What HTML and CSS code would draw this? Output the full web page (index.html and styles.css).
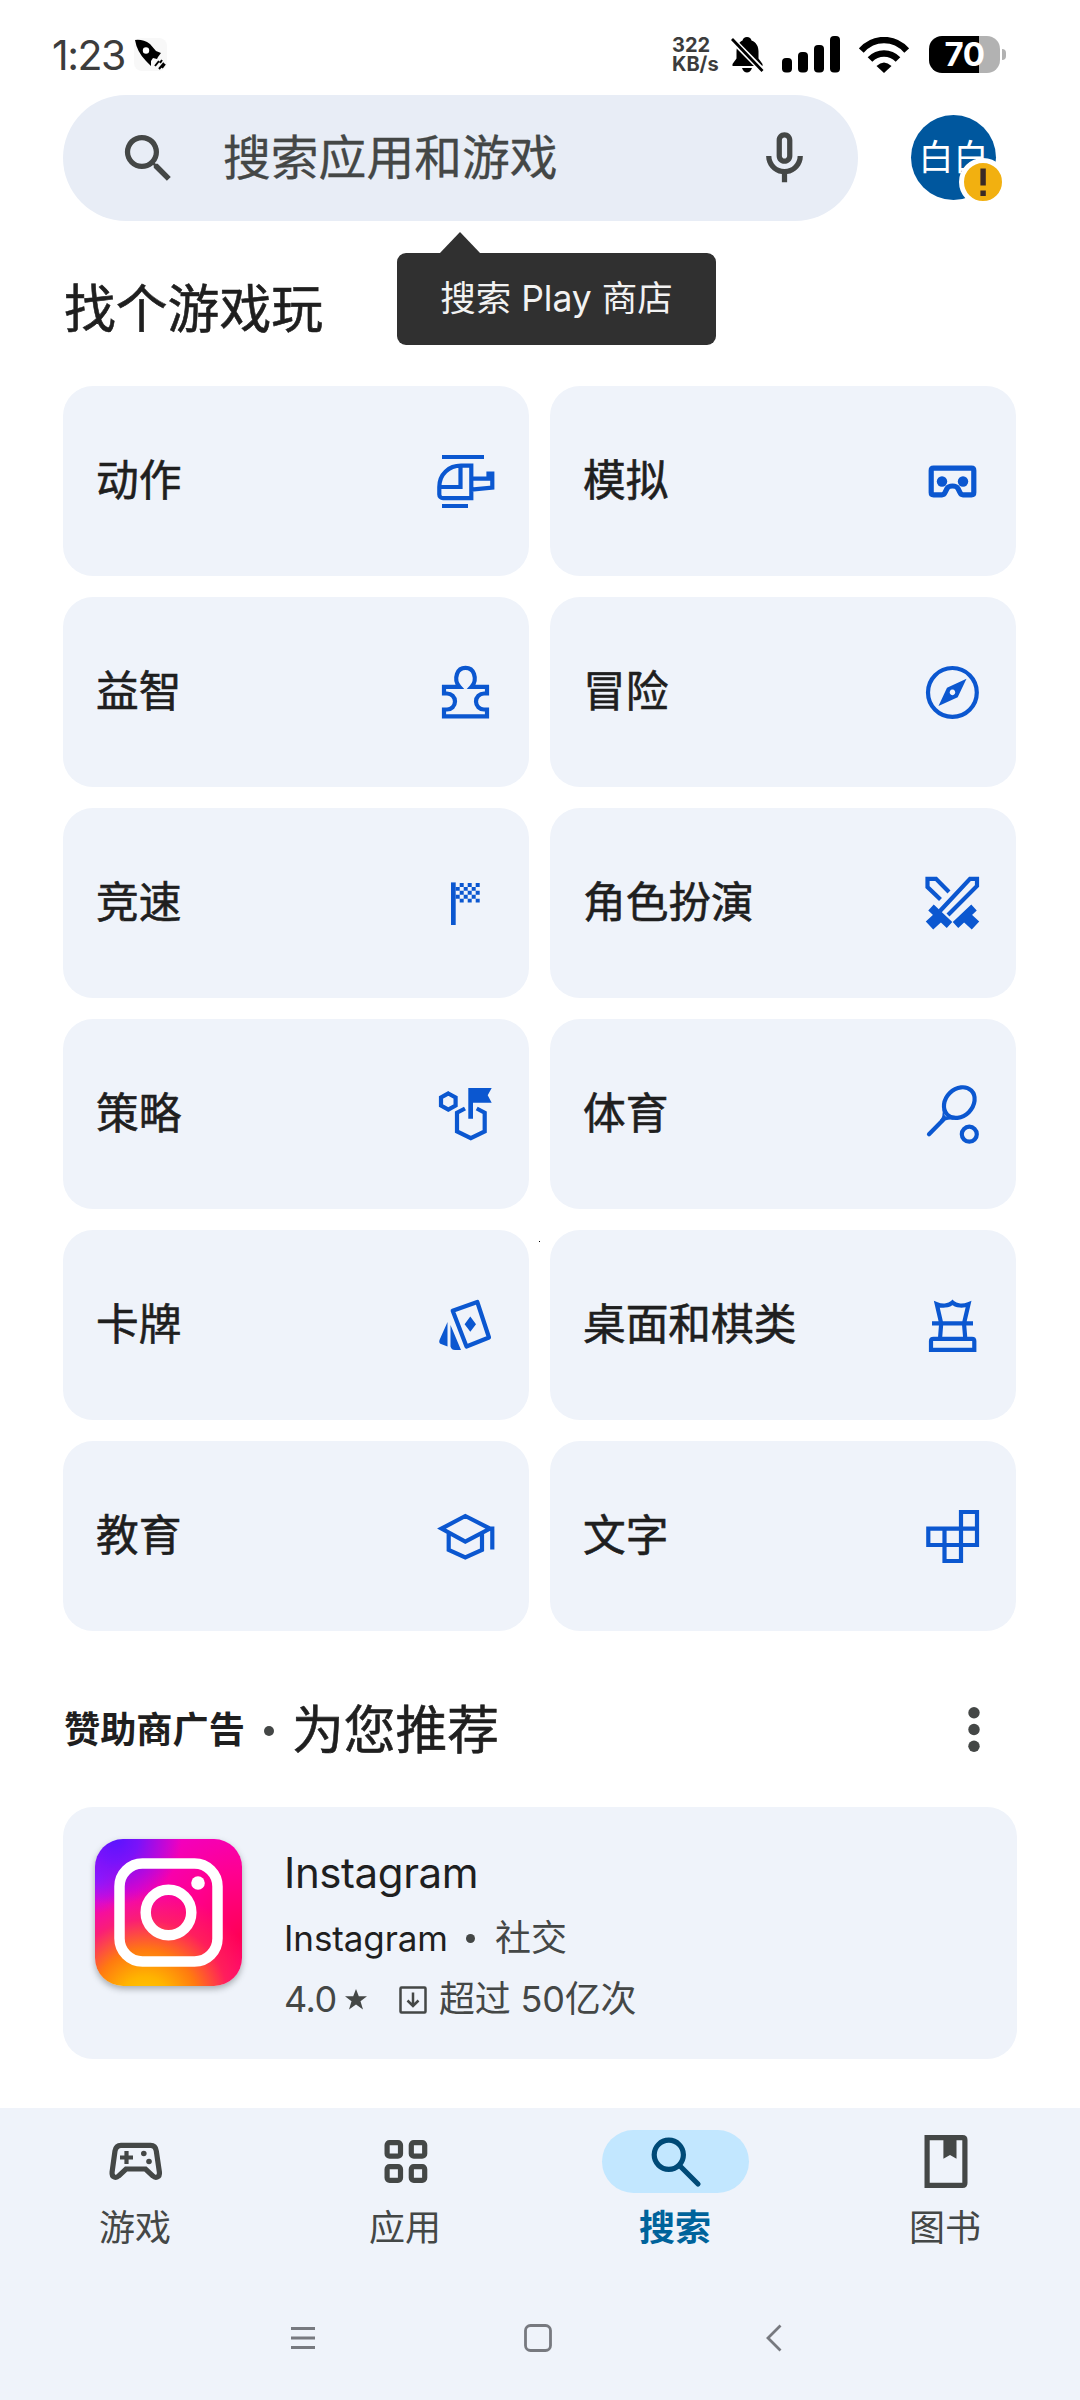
FILE: index.html
```html
<!DOCTYPE html>
<html lang="zh-CN">
<head>
<meta charset="utf-8">
<title>搜索应用和游戏</title>
<link rel="stylesheet" href="styles.css">
</head>
<body>
<div class="screen">
  <header class="status">
    <span class="clock">1:23</span>
    <svg class="rocket" width="33" height="33" viewBox="0 0 33 33"><rect width="33" height="33" rx="8" fill="#f8f8f8"/><path d="M1 2Q9 1 16 6L22 13 27 15 24 19 23 21 19 20 17 23 17 28 12 23Q3 14 1 2Z"/><circle cx="12" cy="12.500" r="3.200" fill="#fff"/><path d="M21 28l4-5M25 31l5-6M28 22l-2 3M31 26l-3 4" stroke="#000" stroke-width="2"/></svg>
    <span class="net"><b>322</b><b>KB/s</b></span>
    <svg class="bell" width="33" height="36" viewBox="0 0 33 36"><path d="M16 0c2.500 0 4 1.500 4.500 3.500 5 2 7 6 7 11v7l4 5.500v2H1.500v-2l4-5.500v-7c0-5 2-9 6-11C12 1.500 13.500 0 16 0zM11 31h10c-1 3-3 4.500-5 4.500S12 34 11 31z"/><path d="M0 1.500 32 34" stroke="#fff" stroke-width="6"/><path d="M1 2 31.500 34" stroke="#000" stroke-width="2.800"/></svg>
    <svg class="bars" width="58" height="37" viewBox="0 0 58 37"><rect x="0" y="22" width="10" height="14.500" rx="4"/><rect x="16" y="16" width="10" height="20.500" rx="4"/><rect x="32" y="9" width="10" height="27.500" rx="4"/><rect x="48" y="0" width="10" height="36.500" rx="4"/></svg>
    <svg class="wifi" width="50" height="36" viewBox="0 0 50 36"><g fill="none" stroke="#000" stroke-width="6.500"><path d="M2.300 13.500C15-.400 35-.400 47.700 13.500"/><path d="M11 22.500C19 14.500 31 14.500 39 22.500"/></g><path d="M17.500 29Q25 22 32.500 29L25 36Z"/></svg>
    <span class="battery"><span>70</span></span>
    <i class="battery-tip"></i>
  </header>

  <div class="top">
    <div class="searchbar">
      <svg width="63" height="63" viewBox="0 0 24 24" fill="#444746"><path d="M15.500 14h-.79l-.28-.27A6.471 6.471 0 0 0 16 9.500 6.500 6.500 0 1 0 9.500 16c1.610 0 3.090-.59 4.230-1.570l.27.28v.79l5 4.990L20.490 19l-4.990-5zm-6 0C7.010 14 5 11.990 5 9.500S7.010 5 9.500 5 14 7.010 14 9.500 11.990 14 9.500 14z"/></svg>
      <span class="hint">搜索应用和游戏</span>
      <svg width="63" height="63" viewBox="0 0 24 24" fill="#444746"><path d="M12 14c1.660 0 3-1.340 3-3V5c0-1.660-1.340-3-3-3S9 3.340 9 5v6c0 1.660 1.340 3 3 3zm-1-9c0-.55.45-1 1-1s1 .45 1 1v6c0 .55-.45 1-1 1s-1-.45-1-1V5zm6 6c0 2.760-2.240 5-5 5s-5-2.240-5-5H5c0 3.530 2.610 6.430 6 6.920V21h2v-3.080c3.390-.49 6-3.390 6-6.920h-2z"/></svg>
      <div class="tooltip">搜索 Play 商店</div>
    </div>
    <div class="avatar"><span>白白</span><i class="badge"><svg width="38" height="38" viewBox="0 0 38 38"><path d="M16.400 5.500h5.400v17h-5.400zM16.400 27.500h5.400v5.500h-5.400z" fill="#3a2a26"/></svg></i></div>
  </div>

  <h2 class="heading">找个游戏玩</h2>

  <main class="grid">
    <a class="card"><span>动作</span><svg class="ico" viewBox="0 0 64 64"><path d="M9 8H51M38.300 16.600V49.200H10A3.700 3.700 0 0 1 6.300 45.500V38C6.300 25 16 16.600 28 16.600ZM27.500 17V38H6.500M38.300 29.600H55.500V24.500H59.300V38.600L38.300 40.600M9 57H35"/></svg></a>
    <a class="card"><span>模拟</span><svg class="ico" viewBox="0 0 64 64"><path stroke-width="5.200" d="M13.500 19.200H51.500Q53.800 19.200 53.800 21.500V43.500Q53.800 45.800 51.500 45.800H43Q41 45.800 40 43.500L38 39.500Q36.500 37 32.500 37T27 39.500L25 43.500Q24 45.800 22 45.800H13.500Q11.200 45.800 11.200 43.500V21.500Q11.200 19.200 13.500 19.200Z"/><circle class="f" cx="22" cy="32.500" r="5.200"/><circle class="f" cx="43" cy="32.500" r="5.200"/></svg></a>
    <a class="card"><span>益智</span><svg class="ico" viewBox="0 0 64 64"><path d="M11 26.800H26.500C23 23 22.300 19 24 14A9 9 0 0 1 41 14C42.700 19 42 23 38.500 26.800H54V33.500H51A8 8 0 0 0 51 49.500H54V56.300H11V49.500H14A8 8 0 0 0 14 33.500H11Z"/></svg></a>
    <a class="card"><span>冒险</span><svg class="ico" viewBox="0 0 64 64"><circle cx="32.400" cy="32.400" r="24.400"/><path class="f" fill-rule="evenodd" d="M46.500 18.800 37.700 37.200 18.500 46 27 27.800ZM32.400 29.600a2.800 2.800 0 1 0 .1 0Z"/></svg></a>
    <a class="card"><span>竞速</span><svg class="ico" viewBox="0 0 64 64"><path class="f" d="M18 11.400H22.700V54H18Z"/><path stroke-width="3.900" stroke-dasharray="4 4" d="M26.700 14H46.700M26.700 21.800H46.700M26.700 29.600H46.700M22.700 17.900H43M22.700 25.700H43"/></svg></a>
    <a class="card"><span>角色扮演</span><svg class="ico" viewBox="0 0 64 64"><path d="M20.500 28.500 7.500 16V7.800H16L29 21M20 40 50 7.800H57V15L28 44"/><path stroke-width="8" d="M11 36.500 29.500 54M54 36.500 35.500 54"/><path stroke-width="11" d="M9.500 54.500 22 43M55.500 54.500 43 43"/></svg></a>
    <a class="card"><span>策略</span><svg class="ico" viewBox="0 0 64 64"><path d="M15.300 11.500 22.600 15.500V23.500L15.300 27.500 8 23.500V15.500ZM32 26.500 24 30.700V49.500L37.800 56.200 51.700 49.500V30.700L43.700 26.500"/><path class="f" d="M35.300 6H58.700L54.700 13.300 58.700 20.700H40V36.700H35.300Z"/></svg></a>
    <a class="card"><span>体育</span><svg class="ico" viewBox="0 0 64 64"><ellipse cx="39.300" cy="20.600" rx="17" ry="13.500" transform="rotate(-45 39.300 20.600)"/><path stroke-linecap="round" d="M9 52.300 23 38"/><path class="f" d="M22.500 26 25 34 35 38Q26 36.500 23 40.500L20 38Q23.500 35 22.500 26Z"/><circle cx="49.300" cy="52.200" r="7.500"/></svg></a>
    <a class="card"><span>卡牌</span><svg class="ico" viewBox="0 0 64 64"><path stroke-linejoin="round" d="M19.700 17.700 44.300 9 56 44.500 33.500 53.500Z"/><path class="f" d="M37.300 23.500 43 31.200 37.300 38.800 31.600 31.200ZM14.500 29V53.500L8 51Q5.500 50 6.500 47ZM17.500 32 28 57H22Q18.500 57 17.500 53.500Z"/></svg></a>
    <a class="card"><span>桌面和棋类</span><svg class="ico" viewBox="0 0 64 64"><path d="M11 56.800V48Q11 45.800 13.500 45.800H52Q54.300 45.800 54.300 48V56.800ZM12 30.400H53M20 45.800 21.200 30.400 16.800 11.200Q20.500 12.800 25 12.500 30 12 32.500 9.500 35 12 40 12.500 44.500 12.800 48.500 11.200L44 30.400 45.300 45.800"/></svg></a>
    <a class="card"><span>教育</span><svg class="ico" viewBox="0 0 64 64"><path d="M32.300 12 57 24.600 32.300 37.600 8.500 24.600ZM15.700 29V46L32.300 53.500 49 46V29M55 24.600H59.300V45.500"/></svg></a>
    <a class="card"><span>文字</span><svg class="ico" viewBox="0 0 64 64"><path d="M41 8H57V41H8.300V24.600H57V8H41V57H24.500V24.600"/></svg></a>
    <i class="speck"></i>
  </main>

  <section class="sponsor">
    <b>赞助商广告</b><i></i><h2>为您推荐</h2>
    <svg width="12" height="46" viewBox="0 0 12 46" fill="#444746"><circle cx="6" cy="5.800" r="5.700"/><circle cx="6" cy="22.500" r="5.700"/><circle cx="6" cy="39.200" r="5.700"/></svg>
  </section>

  <article class="ad">
    <div class="logo"><svg width="147" height="147" viewBox="0 0 147 147" fill="none" stroke="#fff" stroke-width="10.500"><rect x="24.500" y="24.500" width="98" height="98" rx="23"/><circle cx="73.500" cy="73.500" r="22.800"/><circle cx="103" cy="44" r="6.800" fill="#fff" stroke="none"/></svg></div>
    <div class="info">
      <div class="name">Instagram</div>
      <div class="dev"><span>Instagram</span><i></i>社交</div>
      <div class="meta"><span class="rate">4.0</span><svg class="star" width="22" height="21" viewBox="0 0 22 21"><path fill="#444746" d="M11 0 13.800 7.300H22L15.500 12.200 18 20.500 11 15.600 4 20.500 6.500 12.200 0 7.300H8.200Z"/></svg><svg class="dl" width="28" height="28" viewBox="0 0 28 28" fill="none" stroke="#444746" stroke-width="2.500"><rect x="1.500" y="1.500" width="25" height="25" rx="1"/><path d="M14 6.500V20M8.500 14.500 14 20 19.500 14.500"/></svg><span class="count">超过 50亿次</span></div>
    </div>
  </article>

  <nav class="tabs">
    <a><span class="pill"><svg width="63" height="63" viewBox="0 0 63 63" fill="none" stroke="#444746" stroke-width="5.200"><path d="M17 15.300H46.500Q51.500 15.300 52.300 21L55.400 42C56 47.500 51.500 48.500 49 46L41.500 39H22L14.500 46C12 48.500 7.500 47.500 8.100 42L11 21Q12 15.300 17 15.300Z"/><path stroke-width="4.200" d="M22.500 21V34M16 27.500H29"/><g fill="#444746" stroke="none"><circle cx="39.800" cy="23.500" r="2.800"/><circle cx="45" cy="31.500" r="2.800"/></g></svg></span>游戏</a>
    <a><span class="pill"><svg width="63" height="63" viewBox="0 0 63 63" fill="none" stroke="#444746" stroke-width="5.200"><rect x="13.100" y="12.600" width="13.400" height="13.600" rx="2.500"/><rect x="37.300" y="12.600" width="13.400" height="13.600" rx="2.500"/><rect x="13.100" y="36.700" width="13.400" height="13.600" rx="2.500"/><rect x="37.300" y="36.700" width="13.400" height="13.600" rx="2.500"/></svg></span>应用</a>
    <a class="on"><span class="pill"><svg width="63" height="63" viewBox="0 0 63 63" fill="none" stroke="#004a77" stroke-width="5.200"><circle cx="24.800" cy="24.800" r="14.600"/><path stroke-linecap="round" d="M35.500 35.500 54 54"/></svg></span>搜索</a>
    <a><span class="pill"><svg width="63" height="63" viewBox="0 0 63 63" fill="none" stroke="#444746" stroke-width="5.200"><path d="M13.100 7.600H48.500Q50.900 7.600 50.900 10V53Q50.900 55.400 48.500 55.400H13.100Z"/><path fill="#444746" stroke="none" d="M29.400 7H42.500V28.700L36 25 29.400 28.700Z"/></svg></span>图书</a>
  </nav>
  <footer class="sysnav">
    <svg width="26" height="26" viewBox="0 0 26 26"><path d="M1 3.500H25M1 13H25M1 22.500H25"/></svg>
    <svg class="home" width="28" height="28" viewBox="0 0 28 28"><rect x="1.500" y="1.500" width="25" height="25" rx="5"/></svg>
    <svg width="16" height="28" viewBox="0 0 16 28"><path d="M14.500 1.500 2 14 14.500 26.500"/></svg>
  </footer>
</div>
</body>
</html>
```
FILE: styles.css
```css
* { box-sizing: border-box; }
body {
  margin: 0;
  background: #fff;
  color: #1f1f1f;
  font-family: Inter, "Noto Sans CJK SC", sans-serif;
}
h2 { margin: 0; font-weight: 400; font-size: 51.800px; line-height: 60px; -webkit-text-stroke: .6px currentColor; }
i { font-style: normal; }
svg { display: block; flex: none; }
.screen { width: 1080px; height: 2400px; display: flex; flex-direction: column; overflow: hidden; }

.status { height: 95px; padding: 14px 74px 0 52px; display: flex; align-items: center; }
.clock { width: 82px; font-size: 41px; letter-spacing: -1.5px; color: #3c3c3c; white-space: nowrap; }
.net { margin-left: auto; width: 59px; display: flex; flex-direction: column; color: #3c3c3c; font-size: 20px; line-height: 18.500px; }
.net b { font-weight: 700; }
.bell { margin-right: 18px; }
.bars { margin-right: 19px; }
.wifi { margin-right: 20px; }
.battery {
  width: 71px; height: 37px; border-radius: 13px;
  background: linear-gradient(90deg, #000 50px, #b2b2b2 50px);
  color: #fff; font-weight: 700; font-size: 33px; line-height: 37px; letter-spacing: -.5px; text-align: center;
}
.battery-tip { width: 4px; height: 11px; margin-left: 2px; border-radius: 0 5px 5px 0; background: #b2b2b2; }

.top { display: flex; align-items: center; padding-left: 63px; height: 126px; }
.searchbar {
  position: relative; width: 795px; height: 126px; border-radius: 63px; background: #e8edf6;
  display: flex; align-items: center; padding: 0 42px 0 54px;
}
.hint { flex: 1; padding-left: 43px; font-size: 47.800px; line-height: 60px; color: #444746; -webkit-text-stroke: .3px currentColor; }
.tooltip {
  position: absolute; left: 334px; top: 158px; width: 319px; height: 92px; border-radius: 9px;
  background: #303030; color: #f2f2f2; font-size: 35.500px; line-height: 92px; text-align: center; white-space: nowrap; z-index: 1;
}
.tooltip::before {
  content: ""; position: absolute; left: 42px; top: -21px;
  border: solid transparent; border-width: 0 21px 22px; border-bottom-color: #303030;
}
.avatar {
  position: relative; margin: -1px 0 0 53px; width: 85px; height: 85px; border-radius: 50%;
  background: #00579e; color: #fff; font-size: 35px; line-height: 85px; text-align: center;
}
.badge {
  position: absolute; left: 48px; top: 43px; width: 48px; height: 48px; border: 5px solid #fff; border-radius: 50%;
  background: #f2b010;
}
.heading { padding: 58px 0 0 64px; height: 165px; }

.grid { position: relative; display: grid; grid-template-columns: 466px 466px; grid-auto-rows: 190px; gap: 21px; padding-left: 63px; }
.card {
  display: flex; align-items: center; justify-content: space-between;
  padding: 0 32px 0 33px; border-radius: 30px; background: #eff3fa; font-size: 42.700px; -webkit-text-stroke: .6px currentColor;
}
.card span { padding-bottom: 8px; }
.ico { width: 64px; height: 64px; fill: none; stroke: #0b57d0; stroke-width: 4.200; }
.ico .f { fill: #0b57d0; stroke: none; }
.speck { position: absolute; left: 539px; top: 855px; width: 1px; height: 1px; background: #000; }

.sponsor { display: flex; align-items: center; height: 176px; padding: 22px 100px 0 64px; }
.sponsor b { font-size: 36.200px; font-weight: 700; padding-bottom: 6px; }
.sponsor i { width: 10px; height: 10px; border-radius: 50%; background: #444746; margin: 1px 18px 0 19px; }
.sponsor svg { margin-left: auto; }

.ad { width: 954px; height: 252px; margin-left: 63px; border-radius: 30px; background: #eff3fa; display: flex; padding: 32px; }
.logo {
  width: 147px; height: 147px; border-radius: 28px; box-shadow: 0 3px 6px rgba(60, 64, 67, .4);
  background:
    radial-gradient(circle at 14% 0, #5a14ff 0, rgba(110, 20, 255, .9) 12%, rgba(230, 0, 240, 0) 34%),
    radial-gradient(circle at 0 26%, #a01cff 0, rgba(220, 20, 240, 0) 20%),
    radial-gradient(circle at 34% 112%, #ffd000 0, #ffb400 14%, #ff7a10 28%, rgba(255, 50, 70, .6) 44%, rgba(255, 0, 120, 0) 60%),
    radial-gradient(circle at 100% 66%, #ff0055 0, #ff0090 36%, #f200c0 66%);
}
.info { margin-left: 42px; display: flex; flex-direction: column; }
.name { font-size: 42px; line-height: 68px; letter-spacing: -.4px; }
.dev { display: flex; align-items: center; font-size: 36px; line-height: 62px; color: #444746; }
.dev span { color: #1f1f1f; font-size: 35px; letter-spacing: -.1px; }
.dev i { width: 9px; height: 9px; border-radius: 50%; background: #444746; margin: 0 20px 0 18px; }
.meta { display: flex; align-items: center; font-size: 36px; line-height: 61px; color: #444746; }
.rate { width: 54px; letter-spacing: -.5px; }
.star { margin-left: 7px; }
.dl { margin: 0 12px 0 32px; }
.count { letter-spacing: -.2px; }

.tabs { margin-top: 49px; height: 162px; padding-top: 22px; background: #eff3fa; display: grid; grid-template-columns: repeat(4, 270px); }
.tabs a { display: flex; flex-direction: column; align-items: center; gap: 8px; font-size: 36px; line-height: 54px; color: #444746; }
.tabs .on { color: #00639b; font-weight: 700; }
.pill { width: 147px; height: 63px; border-radius: 32px; display: flex; justify-content: center; }
.on .pill { background: #c2e7ff; }
.sysnav { flex: 1; background: #eff3fa; display: flex; align-items: flex-start; padding: 54px 0 0 290px; }
.sysnav svg { height: 28px; fill: none; stroke: #77797f; stroke-width: 2.800; }
.sysnav .home { margin: 0 214px 0 208px; }
```
